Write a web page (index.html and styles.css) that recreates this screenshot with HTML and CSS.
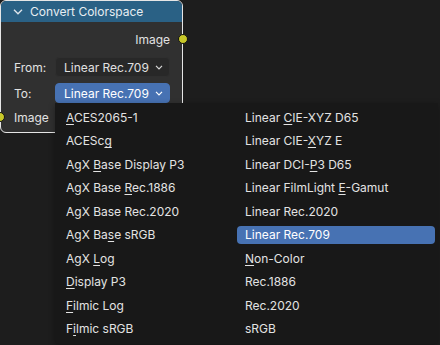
FILE: index.html
```html
<!DOCTYPE html>
<html>
<head>
<meta charset="utf-8">
<link rel="stylesheet" href="styles.css">
</head>
<body>
<div class="canvas">
  <div class="node">
    <div class="node-header">
      <svg class="chev" width="10" height="6" viewBox="0 0 10 6"><path d="M1 0.8 L5 4.8 L9 0.8" fill="none" stroke="#dfe6ec" stroke-width="1.3"/></svg>
      <span>Convert Colorspace</span>
    </div>
    <div class="node-body">
      <div class="row out-row">
        <span class="label">Image</span>
        <span class="socket socket-out"></span>
      </div>
      <div class="row field-row from-row">
        <span class="label field-label">From:</span>
        <div class="dropdown">
          <span>Linear Rec.709</span>
          <svg width="8" height="5" viewBox="0 0 8 5"><path d="M1 0.8 L4 3.8 L7 0.8" fill="none" stroke="#d8d8d8" stroke-width="1.2"/></svg>
        </div>
      </div>
      <div class="row field-row to-row">
        <span class="label field-label">To:</span>
        <div class="dropdown active">
          <span>Linear Rec.709</span>
          <svg width="8" height="5" viewBox="0 0 8 5"><path d="M1 0.8 L4 3.8 L7 0.8" fill="none" stroke="#ffffff" stroke-width="1.2"/></svg>
        </div>
      </div>
      <div class="row in-row">
        <span class="socket socket-in"></span>
        <span class="label">Image</span>
      </div>
    </div>
  </div>

  <div class="menu">
    <div class="item"><u>A</u>CES2065-1</div>
    <div class="item">ACESc<u>g</u></div>
    <div class="item">AgX <u>B</u>ase Display P3</div>
    <div class="item">AgX Base <u>R</u>ec.1886</div>
    <div class="item">AgX Base Rec.2020</div>
    <div class="item">AgX Ba<u>s</u>e sRGB</div>
    <div class="item">AgX <u>L</u>og</div>
    <div class="item"><u>D</u>isplay P3</div>
    <div class="item"><u>F</u>ilmic Log</div>
    <div class="item">F<u>i</u>lmic sRGB</div>
    <div class="item">Linear <u>C</u>IE-XYZ D65</div>
    <div class="item">Linear CIE-<u>X</u>YZ E</div>
    <div class="item">Linear DCI-<u>P</u>3 D65</div>
    <div class="item">Linear FilmLight <u>E</u>-Gamut</div>
    <div class="item">Linear Rec.2020</div>
    <div class="item selected">Linear Rec.709</div>
    <div class="item"><u>N</u>on-Color</div>
    <div class="item">Rec.1886</div>
    <div class="item">Rec.2020</div>
    <div class="item">sRGB</div>
  </div>
</div>
</body>
</html>
```

FILE: styles.css
```css
html, body {
  margin: 0;
  padding: 0;
  background: #1d1d1d;
}
body {
  font-family: Inter, "DejaVu Sans", sans-serif;
  font-size: 12px;
  color: #e4e4e4;
}
.canvas {
  position: relative;
  width: 440px;
  height: 345px;
  overflow: hidden;
  background: #1d1d1d;
}
.node {
  position: absolute;
  left: 0;
  top: 0;
  width: 181px;
  height: 131px;
  border: 1px solid #e6e6e6;
  border-radius: 6px;
  background: #303030;
}
.node-header {
  height: 21px;
  background: #2a6185;
  border-radius: 5px 5px 0 0;
  display: flex;
  align-items: center;
  padding-left: 12px;
  gap: 7px;
  color: #e8eef2;
}
.chev { display: block; }
.node-body {
  display: flex;
  flex-direction: column;
  padding-top: 7px;
}
.row {
  position: relative;
  height: 20px;
  display: flex;
  align-items: center;
}
.out-row { justify-content: flex-end; padding-right: 12px; }
.from-row { margin-top: 8px; }
.to-row { margin-top: 6px; }
.in-row { margin-top: 4px; padding-left: 13px; }
.field-row { padding-left: 13px; }
.field-label { width: 41px; }
.label { color: #e2e2e2; }
.dropdown {
  width: 115px;
  height: 20px;
  box-sizing: border-box;
  border-radius: 4px;
  background: #282828;
  border: 1px solid #2f2f2f;
  display: flex;
  align-items: center;
  justify-content: space-between;
  padding: 0 6px 0 8px;
  color: #e0e0e0;
}
.dropdown.active {
  background: #4772b3;
  border-color: #4772b3;
  color: #ffffff;
}
.dropdown svg { display: block; }
.socket {
  position: absolute;
  width: 8px;
  height: 8px;
  border-radius: 50%;
  background: #c7c729;
  border: 1px solid #111;
  top: 5px;
}
.socket-out { right: -6px; }
.socket-in { left: -6px; }
.menu {
  position: absolute;
  left: 55px;
  top: 103px;
  width: 383px;
  height: 241px;
  box-sizing: border-box;
  padding: 3px;
  background: #181818;
  border-radius: 0 0 4px 4px;
  box-shadow: 0 2px 6px rgba(0,0,0,0.35);
  display: grid;
  grid-auto-flow: column;
  grid-template-rows: repeat(10, 23.5px);
  grid-template-columns: 177px 198px;
  column-gap: 2px;
}
.item {
  align-self: center;
  height: 18px;
  line-height: 18px;
  padding: 0 8px;
  border-radius: 4px;
  color: #e3e3e3;
  white-space: nowrap;
}
.item u {
  text-decoration-thickness: 1px;
  text-underline-offset: 2px;
}
.item.selected {
  background: #4772b3;
  color: #ffffff;
}
```
